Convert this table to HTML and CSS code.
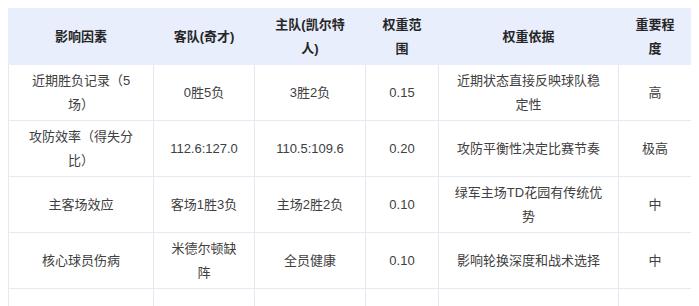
FILE: index.html
```html
<!DOCTYPE html>
<html lang="zh-CN">
<head>
  <meta charset="UTF-8" />
  <meta name="viewport" content="width=device-width, initial-scale=1.0" />
  <title>影响因素权重表</title>
  <link rel="stylesheet" href="styles.css">
</head>
<body>

  <!-- WEIGHT TABLE -->
  <table class="factor-table">
    <colgroup>
      <col class="col-factor">
      <col class="col-away">
      <col class="col-home">
      <col class="col-weight">
      <col class="col-basis">
      <col class="col-level">
    </colgroup>
    <thead>
      <tr>
        <th>影响因素</th>
        <th>客队(奇才)</th>
        <th>主队(凯尔特人)</th>
        <th>权重范围</th>
        <th>权重依据</th>
        <th>重要程度</th>
      </tr>
    </thead>
    <tbody>
      <tr>
        <td>近期胜负记录（5场）</td>
        <td>0胜5负</td>
        <td>3胜2负</td>
        <td>0.15</td>
        <td>近期状态直接反映球队稳定性</td>
        <td>高</td>
      </tr>
      <tr>
        <td>攻防效率（得失分比）</td>
        <td>112.6:127.0</td>
        <td>110.5:109.6</td>
        <td>0.20</td>
        <td>攻防平衡性决定比赛节奏</td>
        <td>极高</td>
      </tr>
      <tr>
        <td>主客场效应</td>
        <td>客场1胜3负</td>
        <td>主场2胜2负</td>
        <td>0.10</td>
        <td>绿军主场TD花园有传统优势</td>
        <td>中</td>
      </tr>
      <tr>
        <td>核心球员伤病</td>
        <td>米德尔顿缺阵</td>
        <td>全员健康</td>
        <td>0.10</td>
        <td>影响轮换深度和战术选择</td>
        <td>中</td>
      </tr>
      <tr>
        <td>历史交锋（近5场）</td>
        <td>0胜5负</td>
        <td>5胜0负</td>
        <td>0.25</td>
        <td>心理优势与战术克制明显</td>
        <td>极高</td>
      </tr>
    </tbody>
  </table>

</body>
</html>
```

FILE: styles.css
```css
/* CSS VARIABLES */
:root {
  --color-head-bg: #e8eefc;
  --color-border: #e6e9f1;
  --color-text: #404040;
  --color-head-text: #262626;
  --font-body: 'Liberation Sans', 'Noto Sans CJK SC', sans-serif;
}

body {
  margin: 8px;
  font-family: var(--font-body);
  color: var(--color-text);
  background: #fff;
}

/* TABLE */
.factor-table {
  width: 683px;
  border-collapse: collapse;
  table-layout: fixed;
  font-size: 13px;
  line-height: 23.5px;
}

.col-factor { width: 145px; }
.col-away   { width: 101px; }
.col-home   { width: 111px; }
.col-weight { width: 73px; }
.col-basis  { width: 180px; }
.col-level  { width: 73px; }

.factor-table th,
.factor-table td {
  border: 1px solid var(--color-border);
  padding: 4px 15px;
  height: 47px;
  text-align: center;
  vertical-align: middle;
}

.factor-table th {
  background: var(--color-head-bg);
  border-color: var(--color-head-bg);
  color: var(--color-head-text);
  font-weight: 700;
}
```
